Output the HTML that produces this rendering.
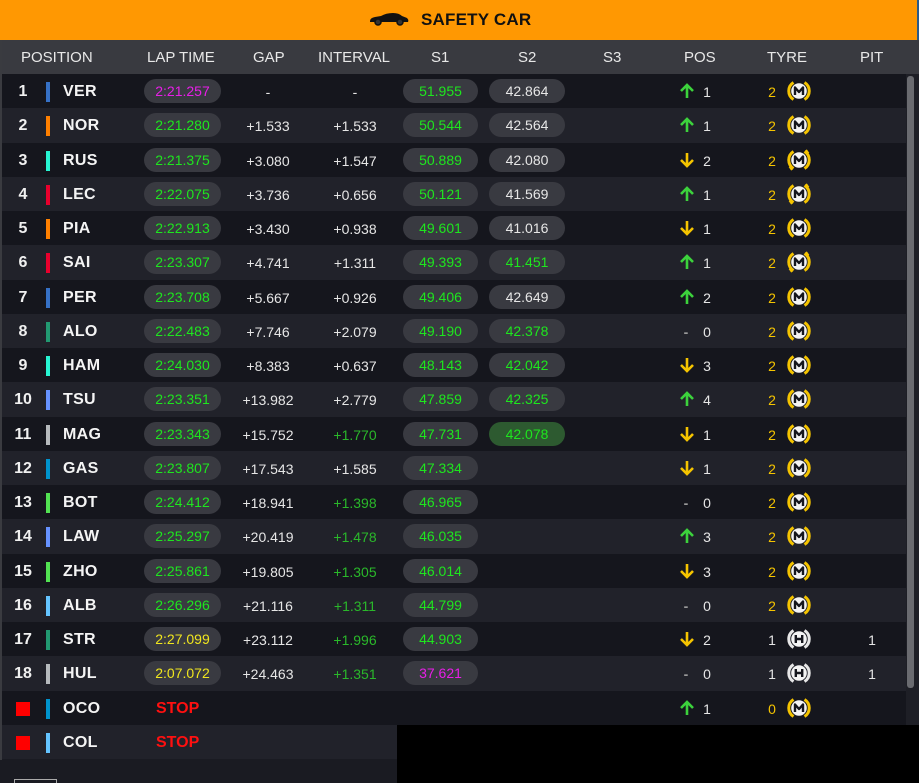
<!DOCTYPE html>
<html><head><meta charset="utf-8"><style>
*{margin:0;padding:0;box-sizing:border-box}
body{width:919px;height:783px;background:#1a1b22;font-family:"Liberation Sans",sans-serif;color:#e6e6e6;position:relative;overflow:hidden}
.top{position:absolute;left:0;top:0;width:919px;height:40px;background:#ff9802;border-right:2px solid #2a5a8a}
.top .t{position:absolute;left:421px;top:10px;font-weight:bold;font-size:17px;color:#111;letter-spacing:0.2px}
.hd{position:absolute;left:0;top:40px;width:919px;height:34px;background:#393a40;font-size:15px;color:#e8e8e8}
.hd span{position:absolute;top:9px;text-align:center}
.r{position:absolute;left:0;width:906px;height:34.3px;font-size:14px}
.o{background:#15161d}.e{background:#21222a}
.r span{position:absolute;top:1px;line-height:34px}
.n{left:8px;width:30px;text-align:center;font-weight:bold;font-size:16px;color:#f0f0f0}
.b{left:46px;width:4px;height:20px;top:8px!important}
.c{left:63px;font-weight:bold;font-size:16px;color:#f4f4f4;letter-spacing:0.3px}
.p{height:24px;top:5px!important;line-height:24px!important;border-radius:12px;background:#393a41;text-align:center}
.lt{left:144px;width:77px}
.g{left:228px;width:80px;text-align:center}
.iv{left:315px;width:80px;text-align:center}
.s1{left:403px;width:75px}
.s2{left:489px;width:76px}
.ar{left:679px;width:16px;top:9px!important;line-height:0!important}
.dsh{left:681px;width:10px;text-align:center;color:#9a9a9a;font-weight:bold}
.pn{left:700px;width:14px;text-align:center}
.ty{left:765px;width:14px;text-align:center;color:#f5c400}
.ic{left:787px;top:5px!important;line-height:0!important}
.pit{left:862px;width:20px;text-align:center}
.G{color:#1ee61e}.M{color:#e81ee8}.Y{color:#f0e61e}.IG{color:#2ab82a}
.hl{background:#2d5a30}
.stop{left:156px;color:#ff1010;font-weight:bold;font-size:16px}
.sq{left:16px;width:14px;height:14px;top:11px!important;background:#ff0000}
</style></head><body>
<div class="top"><svg style="position:absolute;left:369px;top:12px" width="40" height="14" viewBox="0 0 40 14"><path d="M1 9 Q1 6 6 5 L12 4 Q17 1 24 1 Q30 1 33 4 L38 6 Q40 8 39 10 L1 10 Z" fill="#111"/><circle cx="9" cy="10" r="3" fill="#333" stroke="#111" stroke-width="1.5"/><circle cx="31" cy="10" r="3" fill="#333" stroke="#111" stroke-width="1.5"/></svg><span class="t">SAFETY CAR</span></div>
<div class="hd"><span style="left:21px">POSITION</span><span style="left:147px">LAP TIME</span><span style="left:253px">GAP</span><span style="left:318px">INTERVAL</span><span style="left:431px">S1</span><span style="left:518px">S2</span><span style="left:603px">S3</span><span style="left:684px">POS</span><span style="left:767px">TYRE</span><span style="left:860px">PIT</span></div>

<svg width="0" height="0" style="position:absolute"><defs>
<g id="tm"><path d="M6.5 3.5 A10 10 0 0 0 6.5 20.5" fill="none" stroke="#f5c400" stroke-width="3"/><path d="M17.5 3.5 A10 10 0 0 1 17.5 20.5" fill="none" stroke="#f5c400" stroke-width="3"/><circle cx="12" cy="12" r="7.8" fill="#f4f4f4"/><path d="M8 16 V8.5 L12 13 L16 8.5 V16" fill="none" stroke="#15161d" stroke-width="2.4" stroke-linejoin="round"/></g>
<g id="tu"><use href="#tm"/><path d="M19 2 L21.5 5.5 M2.5 18.5 L5 22" stroke="#f5c400" stroke-width="2"/></g>
<g id="th"><path d="M6.5 3.5 A10 10 0 0 0 6.5 20.5" fill="none" stroke="#e8e8e8" stroke-width="3"/><path d="M17.5 3.5 A10 10 0 0 1 17.5 20.5" fill="none" stroke="#e8e8e8" stroke-width="3"/><circle cx="12" cy="12" r="7.8" fill="#f4f4f4"/><path d="M8.8 8 V16 M15.2 8 V16 M8.8 12 H15.2" fill="none" stroke="#15161d" stroke-width="2.4"/></g>
<g id="au"><path d="M8 15 V2 M2 8 L8 2 L14 8" fill="none" stroke="#3cd23c" stroke-width="2.6"/></g>
<g id="ad"><path d="M8 1 V14 M2 8 L8 14 L14 8" fill="none" stroke="#f5c400" stroke-width="2.6"/></g>
</defs></svg>

<div class="r o" style="top:74px"><span class="n">1</span><span class="b" style="background:#3671c6"></span><span class="c">VER</span><span class="p lt M">2:21.257</span><span class="g">-</span><span class="iv">-</span><span class="p s1 G">51.955</span><span class="p s2">42.864</span><span class="ar"><svg width="16" height="16"><use href="#au"/></svg></span><span class="pn">1</span><span class="ty">2</span><span class="ic"><svg width="24" height="24"><use href="#tm"/></svg></span></div>
<div class="r e" style="top:108.3px"><span class="n">2</span><span class="b" style="background:#ff8000"></span><span class="c">NOR</span><span class="p lt G">2:21.280</span><span class="g">+1.533</span><span class="iv">+1.533</span><span class="p s1 G">50.544</span><span class="p s2">42.564</span><span class="ar"><svg width="16" height="16"><use href="#au"/></svg></span><span class="pn">1</span><span class="ty">2</span><span class="ic"><svg width="24" height="24"><use href="#tm"/></svg></span></div>
<div class="r o" style="top:142.5px"><span class="n">3</span><span class="b" style="background:#27f4d2"></span><span class="c">RUS</span><span class="p lt G">2:21.375</span><span class="g">+3.080</span><span class="iv">+1.547</span><span class="p s1 G">50.889</span><span class="p s2">42.080</span><span class="ar"><svg width="16" height="16"><use href="#ad"/></svg></span><span class="pn">2</span><span class="ty">2</span><span class="ic"><svg width="24" height="24"><use href="#tu"/></svg></span></div>
<div class="r e" style="top:176.8px"><span class="n">4</span><span class="b" style="background:#e8002d"></span><span class="c">LEC</span><span class="p lt G">2:22.075</span><span class="g">+3.736</span><span class="iv">+0.656</span><span class="p s1 G">50.121</span><span class="p s2">41.569</span><span class="ar"><svg width="16" height="16"><use href="#au"/></svg></span><span class="pn">1</span><span class="ty">2</span><span class="ic"><svg width="24" height="24"><use href="#tu"/></svg></span></div>
<div class="r o" style="top:211px"><span class="n">5</span><span class="b" style="background:#ff8000"></span><span class="c">PIA</span><span class="p lt G">2:22.913</span><span class="g">+3.430</span><span class="iv">+0.938</span><span class="p s1 G">49.601</span><span class="p s2">41.016</span><span class="ar"><svg width="16" height="16"><use href="#ad"/></svg></span><span class="pn">1</span><span class="ty">2</span><span class="ic"><svg width="24" height="24"><use href="#tm"/></svg></span></div>
<div class="r e" style="top:245.3px"><span class="n">6</span><span class="b" style="background:#e8002d"></span><span class="c">SAI</span><span class="p lt G">2:23.307</span><span class="g">+4.741</span><span class="iv">+1.311</span><span class="p s1 G">49.393</span><span class="p s2 G">41.451</span><span class="ar"><svg width="16" height="16"><use href="#au"/></svg></span><span class="pn">1</span><span class="ty">2</span><span class="ic"><svg width="24" height="24"><use href="#tu"/></svg></span></div>
<div class="r o" style="top:279.6px"><span class="n">7</span><span class="b" style="background:#3671c6"></span><span class="c">PER</span><span class="p lt G">2:23.708</span><span class="g">+5.667</span><span class="iv">+0.926</span><span class="p s1 G">49.406</span><span class="p s2">42.649</span><span class="ar"><svg width="16" height="16"><use href="#au"/></svg></span><span class="pn">2</span><span class="ty">2</span><span class="ic"><svg width="24" height="24"><use href="#tm"/></svg></span></div>
<div class="r e" style="top:313.8px"><span class="n">8</span><span class="b" style="background:#229971"></span><span class="c">ALO</span><span class="p lt G">2:22.483</span><span class="g">+7.746</span><span class="iv">+2.079</span><span class="p s1 G">49.190</span><span class="p s2 G">42.378</span><span class="dsh">-</span><span class="pn">0</span><span class="ty">2</span><span class="ic"><svg width="24" height="24"><use href="#tm"/></svg></span></div>
<div class="r o" style="top:348.1px"><span class="n">9</span><span class="b" style="background:#27f4d2"></span><span class="c">HAM</span><span class="p lt G">2:24.030</span><span class="g">+8.383</span><span class="iv">+0.637</span><span class="p s1 G">48.143</span><span class="p s2 G">42.042</span><span class="ar"><svg width="16" height="16"><use href="#ad"/></svg></span><span class="pn">3</span><span class="ty">2</span><span class="ic"><svg width="24" height="24"><use href="#tm"/></svg></span></div>
<div class="r e" style="top:382.3px"><span class="n">10</span><span class="b" style="background:#6692ff"></span><span class="c">TSU</span><span class="p lt G">2:23.351</span><span class="g">+13.982</span><span class="iv">+2.779</span><span class="p s1 G">47.859</span><span class="p s2 G">42.325</span><span class="ar"><svg width="16" height="16"><use href="#au"/></svg></span><span class="pn">4</span><span class="ty">2</span><span class="ic"><svg width="24" height="24"><use href="#tm"/></svg></span></div>
<div class="r o" style="top:416.6px"><span class="n">11</span><span class="b" style="background:#b6babd"></span><span class="c">MAG</span><span class="p lt G">2:23.343</span><span class="g">+15.752</span><span class="iv IG">+1.770</span><span class="p s1 G">47.731</span><span class="p s2 G hl">42.078</span><span class="ar"><svg width="16" height="16"><use href="#ad"/></svg></span><span class="pn">1</span><span class="ty">2</span><span class="ic"><svg width="24" height="24"><use href="#tm"/></svg></span></div>
<div class="r e" style="top:450.8px"><span class="n">12</span><span class="b" style="background:#0093cc"></span><span class="c">GAS</span><span class="p lt G">2:23.807</span><span class="g">+17.543</span><span class="iv">+1.585</span><span class="p s1 G">47.334</span><span class="ar"><svg width="16" height="16"><use href="#ad"/></svg></span><span class="pn">1</span><span class="ty">2</span><span class="ic"><svg width="24" height="24"><use href="#tm"/></svg></span></div>
<div class="r o" style="top:485.1px"><span class="n">13</span><span class="b" style="background:#52e252"></span><span class="c">BOT</span><span class="p lt G">2:24.412</span><span class="g">+18.941</span><span class="iv IG">+1.398</span><span class="p s1 G">46.965</span><span class="dsh">-</span><span class="pn">0</span><span class="ty">2</span><span class="ic"><svg width="24" height="24"><use href="#tm"/></svg></span></div>
<div class="r e" style="top:519.3px"><span class="n">14</span><span class="b" style="background:#6692ff"></span><span class="c">LAW</span><span class="p lt G">2:25.297</span><span class="g">+20.419</span><span class="iv IG">+1.478</span><span class="p s1 G">46.035</span><span class="ar"><svg width="16" height="16"><use href="#au"/></svg></span><span class="pn">3</span><span class="ty">2</span><span class="ic"><svg width="24" height="24"><use href="#tm"/></svg></span></div>
<div class="r o" style="top:553.6px"><span class="n">15</span><span class="b" style="background:#52e252"></span><span class="c">ZHO</span><span class="p lt G">2:25.861</span><span class="g">+19.805</span><span class="iv IG">+1.305</span><span class="p s1 G">46.014</span><span class="ar"><svg width="16" height="16"><use href="#ad"/></svg></span><span class="pn">3</span><span class="ty">2</span><span class="ic"><svg width="24" height="24"><use href="#tm"/></svg></span></div>
<div class="r e" style="top:587.9px"><span class="n">16</span><span class="b" style="background:#64c4ff"></span><span class="c">ALB</span><span class="p lt G">2:26.296</span><span class="g">+21.116</span><span class="iv IG">+1.311</span><span class="p s1 G">44.799</span><span class="dsh">-</span><span class="pn">0</span><span class="ty">2</span><span class="ic"><svg width="24" height="24"><use href="#tm"/></svg></span></div>
<div class="r o" style="top:622.1px"><span class="n">17</span><span class="b" style="background:#229971"></span><span class="c">STR</span><span class="p lt Y">2:27.099</span><span class="g">+23.112</span><span class="iv IG">+1.996</span><span class="p s1 G">44.903</span><span class="ar"><svg width="16" height="16"><use href="#ad"/></svg></span><span class="pn">2</span><span class="ty" style="color:#e6e6e6">1</span><span class="ic"><svg width="24" height="24"><use href="#th"/></svg></span><span class="pit">1</span></div>
<div class="r e" style="top:656.4px"><span class="n">18</span><span class="b" style="background:#b6babd"></span><span class="c">HUL</span><span class="p lt Y">2:07.072</span><span class="g">+24.463</span><span class="iv IG">+1.351</span><span class="p s1 M">37.621</span><span class="dsh">-</span><span class="pn">0</span><span class="ty" style="color:#e6e6e6">1</span><span class="ic"><svg width="24" height="24"><use href="#th"/></svg></span><span class="pit">1</span></div>
<div class="r o" style="top:690.6px"><span class="sq"></span><span class="b" style="background:#0093cc"></span><span class="c">OCO</span><span class="stop">STOP</span><span class="ar"><svg width="16" height="16"><use href="#au"/></svg></span><span class="pn">1</span><span class="ty">0</span><span class="ic"><svg width="24" height="24"><use href="#tm"/></svg></span></div>
<div class="r e" style="top:724.9px"><span class="sq"></span><span class="b" style="background:#64c4ff"></span><span class="c">COL</span><span class="stop">STOP</span></div>
<div style="position:absolute;left:0;top:40px;width:2px;height:720px;background:#3a3b40"></div>
<div style="position:absolute;left:906px;top:74px;width:13px;height:651px;background:#1e1f26"></div>
<div style="position:absolute;left:907px;top:76px;width:7px;height:612px;background:#6a6b70;border-radius:3px"></div>
<div style="position:absolute;left:14px;top:779px;width:43px;height:4px;border:1px solid #aaa;border-bottom:none"></div>
<div style="position:absolute;left:397px;top:725px;width:522px;height:58px;background:#000"></div>
</body></html>
